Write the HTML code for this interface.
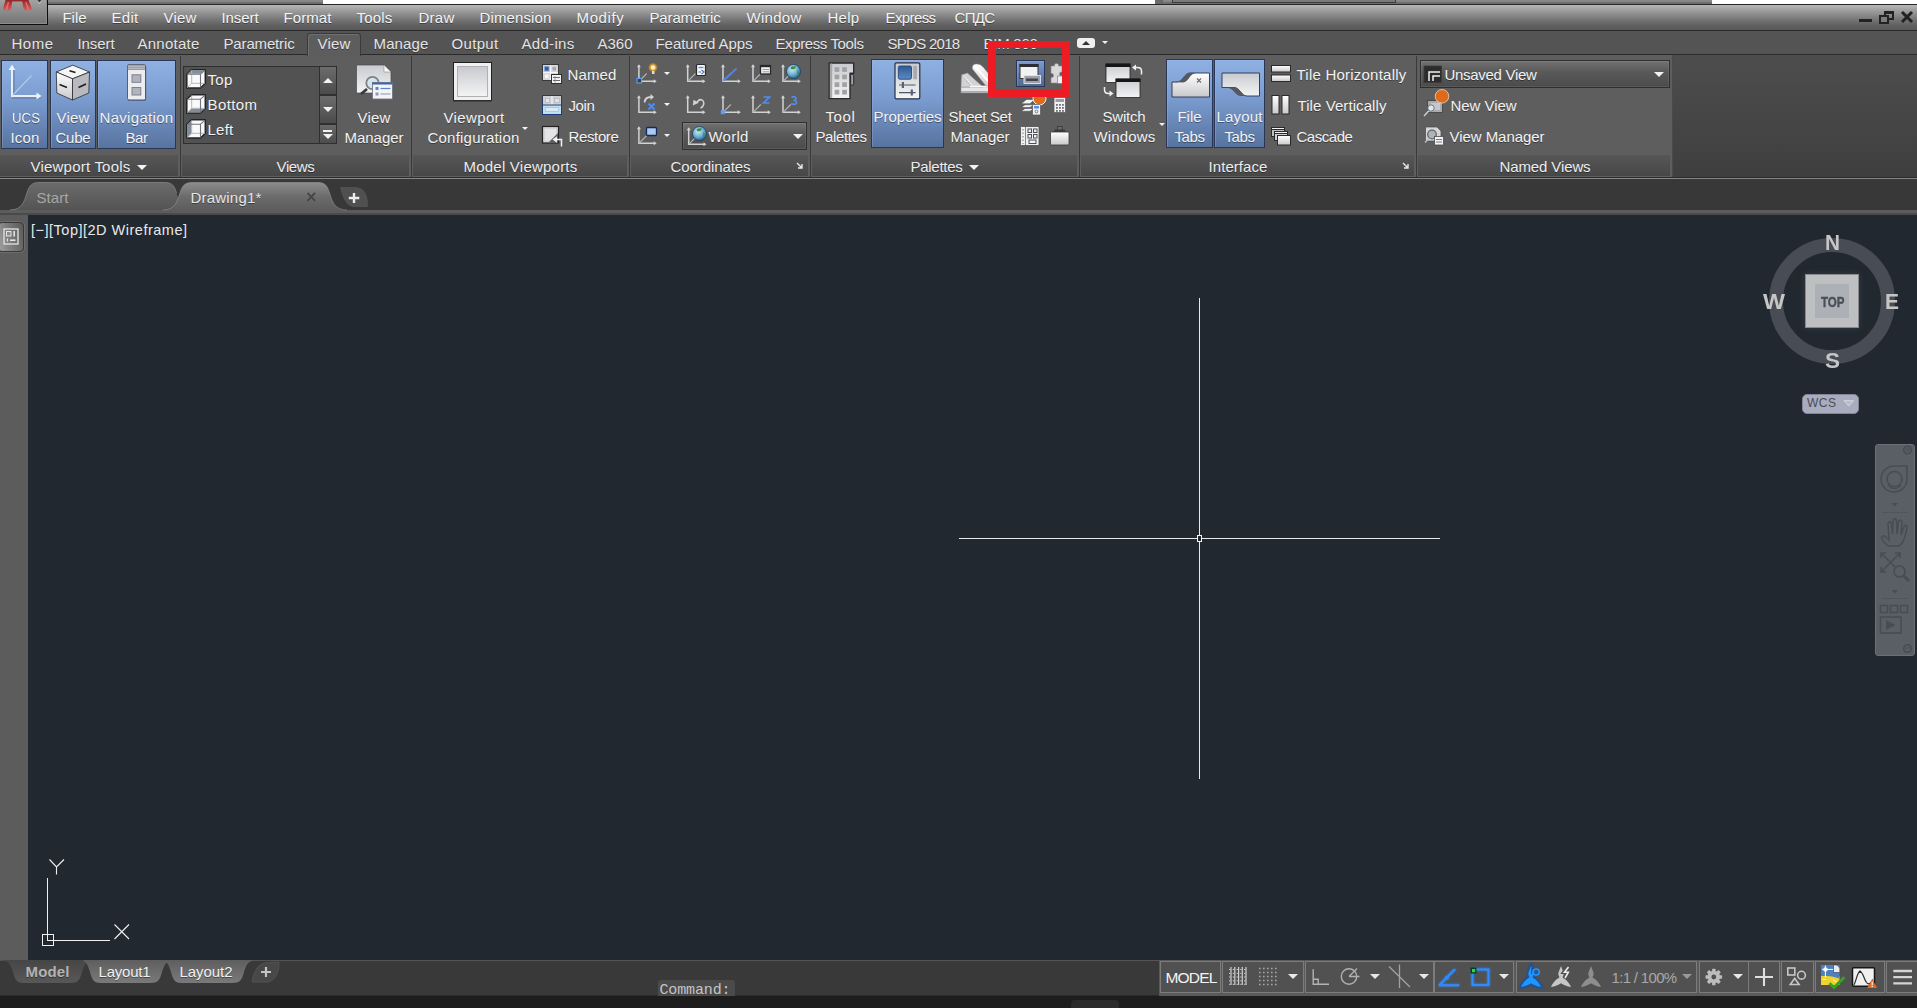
<!DOCTYPE html>
<html><head><meta charset="utf-8"><title>AutoCAD</title>
<style>
html,body{margin:0;padding:0;overflow:hidden;}
body{width:1917px;height:1008px;overflow:hidden;position:relative;background:#212830;font-family:"Liberation Sans",sans-serif;}
.a{position:absolute;}
.t{position:absolute;line-height:1;white-space:nowrap;}
.blue{position:absolute;background:linear-gradient(#8fb1e2 0%,#7a9bcf 45%,#57739f 100%);border:1px solid #2a3658;box-sizing:border-box;box-shadow:inset 1px 1px 0 rgba(160,190,235,.3);}
.sep{position:absolute;top:56px;height:121px;width:1px;background:#393939;}
.pt{position:absolute;top:155px;height:23px;background:#505050;}
svg{position:absolute;overflow:visible;}
.dd{position:absolute;width:0;height:0;border-left:5px solid transparent;border-right:5px solid transparent;border-top:5px solid #f2f2f2;}
.dds{position:absolute;width:0;height:0;border-left:3px solid transparent;border-right:3px solid transparent;border-top:3px solid #f2f2f2;}
.sg{position:absolute;top:961px;height:32px;box-sizing:border-box;border:1px solid #7c7c7c;background:#515151;}
</style></head>
<body>
<!-- top strip -->
<div class="a" style="left:0;top:0;width:1917px;height:4px;background:linear-gradient(#888 0%,#868686 50%,#6e6e6e 55%,#6e6e6e 100%)"></div>
<div class="a" style="left:323px;top:0;width:832px;height:4px;background:#fff"></div>
<div class="a" style="left:1712px;top:0;width:205px;height:4px;background:#fff"></div>
<div class="a" style="left:1172px;top:-1px;width:224px;height:4px;background:#7a7a7a;border:1px solid #3c3c3c;box-sizing:border-box"></div>
<div class="a" style="left:1155px;top:0;width:8px;height:4px;background:#6a6a6a"></div>
<div class="a" style="left:0;top:4px;width:1917px;height:1px;background:#262626"></div>
<!-- menu bar -->
<div class="a" style="left:0;top:5px;width:1917px;height:25px;background:linear-gradient(#b8b8b8 0%,#a4a4a4 16%,#8a8a8a 40%,#747474 60%,#606060 82%,#575757 100%)"></div>
<div class="a" style="left:0;top:30px;width:1917px;height:1px;background:#2a2a2a"></div>
<!-- app button -->
<div class="a" style="left:0;top:0;width:48px;height:25px;background:#0c0c0c"></div>
<div class="a" style="left:0;top:0;width:46.500px;height:23.500px;background:linear-gradient(#a2a2a2,#737373);box-shadow:inset -1px -1px 0 #8c8c8c"></div>
<svg style="left:0;top:0" width="48" height="12" viewBox="0 0 48 12"><defs><linearGradient id="ar" x1="0" y1="0" x2="0" y2="1"><stop offset="0" stop-color="#962426"/><stop offset="1" stop-color="#d95e5e"/></linearGradient></defs>
<path d="M5.500 0 H28.500 L31.800 8.500 Q31.500 10.200 29.500 10.200 H25.500 Q24 10 23.600 8.500 L22.200 1.500 H12.200 L11.200 8.500 Q10.800 10.200 9 10.200 H4.500 Q2.800 10 3.200 8 Z" fill="url(#ar)"/><path d="M6.500 9.500 L8.500 2 M28.500 9.500 L25.800 2" stroke="#f08a8a" stroke-width="1.400" opacity=".7" fill="none"/>
<path d="M37.500 0 H41.300 L39.400 2.300 Z" fill="#2c3344"/><path d="M37.800 1.800 L39.400 3.600 L41 1.800" fill="none" stroke="#d8d8d8" stroke-width=".8" opacity=".7"/></svg>
<!-- window controls -->
<div class="a" style="left:1859px;top:19px;width:13px;height:3px;background:#222"></div>
<div class="a" style="left:1884px;top:11px;width:10px;height:9px;border:2px solid #222;border-top-width:3px;box-sizing:border-box"></div>
<div class="a" style="left:1879px;top:15px;width:10px;height:9px;border:2px solid #222;box-sizing:border-box;background:#7c7c7c"></div>
<svg style="left:1901px;top:12px" width="12" height="10" viewBox="0 0 12 10"><path d="M1 0 L11 10 M11 0 L1 10" stroke="#222" stroke-width="3"/></svg>
<!-- ribbon tab row -->
<div class="a" style="left:0;top:31px;width:1917px;height:23px;background:#545454"></div>
<div class="a" style="left:0;top:54px;width:1917px;height:1px;background:#2a2a2a"></div>
<!-- ribbon body -->
<div class="a" style="left:0;top:55px;width:1917px;height:122px;background:linear-gradient(#4d4d4d,#3f3f3f)"></div>
<div class="a" style="left:0;top:55px;width:1672px;height:122px;background:#5e5e5e"></div>
<div class="a" style="left:0px;top:155px;width:178px;height:21px;background:linear-gradient(#565656,#474747)"></div>
<div class="a" style="left:182px;top:155px;width:227px;height:21px;background:linear-gradient(#565656,#474747)"></div>
<div class="a" style="left:413px;top:155px;width:214px;height:21px;background:linear-gradient(#565656,#474747)"></div>
<div class="a" style="left:631px;top:155px;width:177px;height:21px;background:linear-gradient(#565656,#474747)"></div>
<div class="a" style="left:812px;top:155px;width:265px;height:21px;background:linear-gradient(#565656,#474747)"></div>
<div class="a" style="left:1081px;top:155px;width:333px;height:21px;background:linear-gradient(#565656,#474747)"></div>
<div class="a" style="left:1418px;top:155px;width:252px;height:21px;background:linear-gradient(#565656,#474747)"></div>
<div class="a" style="left:1672px;top:55px;width:1px;height:122px;background:#4a4a4a"></div>
<!-- active View tab -->
<div class="a" style="left:307px;top:33px;width:54px;height:23px;background:#5d5d5d;border:1px solid #3a3a3a;border-bottom:none;box-sizing:border-box;border-radius:3px 3px 0 0;box-shadow:inset 1px 1px 0 #707070"></div>
<!-- panel separators -->
<div class="sep" style="left:180px"></div><div class="sep" style="left:411px"></div><div class="sep" style="left:629px"></div><div class="sep" style="left:810px"></div><div class="sep" style="left:1079px"></div><div class="sep" style="left:1416px"></div>
<!-- blue buttons -->
<div class="blue" style="left:1px;top:60px;width:47px;height:88.500px"></div>
<div class="blue" style="left:50px;top:60px;width:46px;height:88.500px"></div>
<div class="blue" style="left:97px;top:60px;width:79px;height:88.500px"></div>
<div class="blue" style="left:871px;top:59px;width:73px;height:88.500px"></div>
<div class="blue" style="left:1166px;top:59px;width:47px;height:88.500px"></div>
<div class="blue" style="left:1214px;top:59px;width:51px;height:88.500px"></div>
<div class="blue" style="left:1016px;top:60px;width:29px;height:27px;background:linear-gradient(#7c9ace,#52698f)"></div>
<!-- views list box -->
<div class="a" style="left:183px;top:66px;width:154px;height:78px;background:#525252;border:1px solid #2f2f2f;box-sizing:border-box"></div>
<div class="a" style="left:319px;top:67px;width:1px;height:76px;background:#2f2f2f"></div>
<div class="a" style="left:320px;top:67px;width:16px;height:27px;background:linear-gradient(#6c6c6c,#4b4b4b)"></div>
<div class="a" style="left:320px;top:94px;width:16px;height:2px;background:#2f2f2f"></div>
<div class="a" style="left:320px;top:96px;width:16px;height:27px;background:linear-gradient(#6c6c6c,#4b4b4b)"></div>
<div class="a" style="left:320px;top:123px;width:16px;height:2px;background:#2f2f2f"></div>
<div class="a" style="left:320px;top:125px;width:16px;height:18px;background:linear-gradient(#686868,#4d4d4d)"></div>
<div class="a" style="left:322.500px;top:78px;width:0;height:0;border-left:5px solid transparent;border-right:5px solid transparent;border-bottom:5px solid #f2f2f2"></div>
<div class="dd" style="left:322.500px;top:106.500px"></div>
<div class="a" style="left:323px;top:130px;width:9px;height:2px;background:#f0f0f0"></div>
<div class="dd" style="left:322.500px;top:134px"></div>
<!-- World dropdown -->
<div class="a" style="left:682px;top:122px;width:125px;height:28px;background:linear-gradient(#727272,#5a5a5a 40%,#4b4b4b);border:1px solid #2f2f2f;box-sizing:border-box;box-shadow:inset 0 0 0 1px rgba(255,255,255,.08)"></div>
<div class="dd" style="left:793px;top:134px"></div>
<!-- Unsaved view dropdown -->
<div class="a" style="left:1420px;top:60px;width:250px;height:28px;background:linear-gradient(#727272,#5a5a5a 40%,#4b4b4b);border:1px solid #2f2f2f;box-sizing:border-box;box-shadow:inset 0 0 0 1px rgba(255,255,255,.08)"></div>
<div class="dd" style="left:1654px;top:72px"></div>
<!-- title arrows -->
<div class="dd" style="left:137px;top:165px"></div>
<div class="dd" style="left:969px;top:165px"></div>
<div class="dds" style="left:522px;top:127px"></div>
<div class="dds" style="left:1159px;top:123px"></div>
<div class="dds" style="left:664px;top:72px"></div><div class="dds" style="left:664px;top:103px"></div><div class="dds" style="left:664px;top:134px"></div>
<svg style="left:796px;top:162px" width="8" height="8" viewBox="0 0 8 8"><path d="M1 1 L6 6 M6 2 V6 H2" stroke="#e8e8e8" stroke-width="1.4" fill="none"/></svg>
<svg style="left:1402px;top:162px" width="8" height="8" viewBox="0 0 8 8"><path d="M1 1 L6 6 M6 2 V6 H2" stroke="#e8e8e8" stroke-width="1.4" fill="none"/></svg>
<!-- ribbon minimize button -->
<div class="a" style="left:1077px;top:38px;width:18px;height:10px;background:#f0f0f0;border-radius:3px"></div>
<div class="a" style="left:1082px;top:41px;width:0;height:0;border-left:4px solid transparent;border-right:4px solid transparent;border-bottom:4px solid #333"></div>
<div class="dds" style="left:1102px;top:41px"></div>
<!-- band below ribbon + file tabs -->
<div class="a" style="left:0;top:177px;width:1917px;height:1px;background:#2c2c2c"></div>
<div class="a" style="left:0;top:178px;width:1917px;height:1px;background:#868686"></div>
<div class="a" style="left:0;top:179px;width:1917px;height:31px;background:#383838"></div>
<div class="a" style="left:0;top:210px;width:1917px;height:4px;background:#5c5c5c"></div>
<div class="a" style="left:0;top:213px;width:1917px;height:2px;background:#4a4a4a"></div>
<svg style="left:0;top:182px" width="380" height="29" viewBox="0 0 380 29">
 <defs><linearGradient id="ft1" x1="0" y1="0" x2="0" y2="1"><stop offset="0" stop-color="#6b6b6b"/><stop offset="1" stop-color="#545454"/></linearGradient>
 <linearGradient id="ft2" x1="0" y1="0" x2="0" y2="1"><stop offset="0" stop-color="#8c8c8c"/><stop offset=".5" stop-color="#6c6c6c"/><stop offset="1" stop-color="#5c5c5c"/></linearGradient></defs>
 <path d="M10 28 C22 28 24 20 27 11 C29.500 3 32 .5 40 .5 L164 .5 C172 .5 174 3 176.500 11 C179.500 20 181.500 28 193 28 Z" fill="url(#ft1)"/>
 <path d="M10 28 C22 28 24 20 27 11 C29.500 3 32 .5 40 .5 L164 .5 C172 .5 174 3 176.500 11" fill="none" stroke="#7a7a7a" stroke-width="1"/>
 <path d="M163 28.500 C175 28 177 20 180 11 C182.500 3 185 .5 193 .5 L317 .5 C325 .5 327 3 329.500 11 C332.500 20 334.500 28 347 28.500 Z" fill="url(#ft2)"/>
 <path d="M163 28 C175 28 177 20 180 11 C182.500 3 185 .5 193 .5 L317 .5 C325 .5 327 3 329.500 11 C332.500 20 334.500 28 347 28" fill="none" stroke="#9a9a9a" stroke-width=".8" opacity=".7"/>
 <path d="M340.500 5.500 L356 5.500 C365 6.500 367.500 13 367.500 24.500 L353 24.500 C346 23.500 343 15 340.500 5.500 Z" fill="#505050" stroke="#5a5a5a" stroke-width=".6"/>
 <path d="M354 11 V21 M348.800 16 H359.300" stroke="#ececec" stroke-width="2.400"/>
 <path d="M307.500 10.800 L315 18.800 M315 10.800 L307.500 18.800" stroke="#444" stroke-width="1.700"/>
</svg>
<!-- left strip -->
<div class="a" style="left:0;top:215px;width:28px;height:745px;background:#5c5c5c"></div>
<div class="a" style="left:-2px;top:222px;width:26px;height:30px;background:linear-gradient(75deg,#a0a0a0 0%,#7c7c7c 45%,#5a5a5a 100%);border:1px solid #383838;box-sizing:border-box;border-radius:4px;box-shadow:0 0 0 1px #6e6e6e"></div>
<svg style="left:3px;top:228px" width="16" height="17" viewBox="0 0 16 17"><rect x="1" y="1" width="14" height="15" fill="none" stroke="#e4e4e4" stroke-width="1.300"/><rect x="3.500" y="3.500" width="4.500" height="4.500" fill="#8c8c8c" stroke="#e4e4e4" stroke-width="1"/><path d="M11.200 3 V8.500" stroke="#e4e4e4" stroke-width="1.600"/><path d="M4.500 10.500 V13.500" stroke="#e4e4e4" stroke-width="1.200"/><path d="M7 12.200 H12.500" stroke="#e4e4e4" stroke-width="1.600"/></svg>

<!-- ribbon icons -->
<svg style="left:0;top:0" width="1917" height="180" viewBox="0 0 1917 180">
<defs>
 <linearGradient id="gw" x1="0" y1="0" x2="0" y2="1"><stop offset="0" stop-color="#ffffff"/><stop offset="1" stop-color="#c9c9cc"/></linearGradient>
 <linearGradient id="gw2" x1="0" y1="0" x2="0" y2="1"><stop offset="0" stop-color="#c8cad0"/><stop offset="1" stop-color="#f4f4f4"/></linearGradient>
 <linearGradient id="gb" x1="0" y1="0" x2="0" y2="1"><stop offset="0" stop-color="#4a7ab8"/><stop offset="1" stop-color="#2d5a96"/></linearGradient>
 <linearGradient id="gbp" x1="0" y1="0" x2="0" y2="1"><stop offset="0" stop-color="#2c5c94"/><stop offset="1" stop-color="#5d89c0"/></linearGradient>
 <radialGradient id="globe" cx=".4" cy=".35" r=".7"><stop offset="0" stop-color="#cfeaf2"/><stop offset=".55" stop-color="#6fb1cf"/><stop offset="1" stop-color="#1f5a8a"/></radialGradient>
 <radialGradient id="bulb" cx=".5" cy=".5" r=".5"><stop offset="0" stop-color="#fff6c0"/><stop offset=".45" stop-color="#ffb52e"/><stop offset="1" stop-color="#ff9a10" stop-opacity="0"/></radialGradient>
 <g id="ucs" fill="none" stroke="#d2d2d2" stroke-width="1.5"><path d="M1.700 1.500 V17.300 H17.500"/><path d="M1.700 17.300 L9.500 9.500" stroke="#b4b4b4" stroke-width="1.100"/><path d="M-.3 3.300 L1.700 .3 L3.700 3.300 Z M16.500 15.300 L19.500 17.300 L16.500 19.300 Z" fill="#d2d2d2" stroke="none"/></g>
 <g id="ucs0" fill="none" stroke="#d2d2d2" stroke-width="1.500"><path d="M1.700 1.500 V17.300 H17.500"/><path d="M-.3 3.300 L1.700 .3 L3.700 3.300 Z M16.500 15.300 L19.500 17.300 L16.500 19.300 Z" fill="#d2d2d2" stroke="none"/></g>
 <g id="cubebg"><path d="M.8 5.200 L5.700 .8 H19.300 V14.300 L14.500 19 H.8 Z" fill="#fafafa" stroke="#242424" stroke-width="1.500" stroke-linejoin="round"/></g>
 <g id="cubeed" fill="none"><path d="M5.700 1.500 V14.300 H18.800 M5.700 14.300 L1.300 18.500" stroke="#b4b9c1" stroke-width="1"/><path d="M1.300 5.200 H14.500 V18.500 M14.500 5.200 L18.800 1.300" stroke="#6e757f" stroke-width="1.100"/></g>
</defs>
<!-- UCS Icon big -->
<g fill="none" stroke-linecap="square"><path d="M12.500 68 V96.500 H38" stroke="#51689a" stroke-width="3" opacity=".35" transform="translate(1,1)"/><path d="M12 67.500 V96 H38" stroke="#e9eef7" stroke-width="2"/><path d="M13 95 L31 76" stroke="#c8d6ee" stroke-width="1.200" opacity=".8"/>
<path d="M8.500 70 L12 64.500 L15.500 70 Z M36.500 92.500 L41.500 96 L36.500 99.500 Z" fill="#eef2fa" stroke="none"/></g>
<!-- View Cube big -->
<g stroke="#2b2b2b" stroke-width=".8" stroke-linejoin="round"><path d="M72.800 65.200 L89.500 72 L72.500 78.800 L56.300 72 Z" fill="#f6f6f6"/><path d="M56.300 72 L72.500 78.800 V100 L56.800 93 Z" fill="url(#gw)"/><path d="M89.500 72 L72.500 78.800 V100 L88.800 93 Z" fill="#b8babf"/></g>
<path d="M69.500 70.800 L75.500 72.600 M59.500 84.500 L67 87.500 M78.500 87.500 L86 84" stroke="#1e1e1e" stroke-width="1.600" fill="none"/>
<!-- Navigation Bar big -->
<rect x="127.500" y="64.500" width="18" height="35.500" rx="1.500" fill="#ededf0" stroke="#4c5468" stroke-width=".9"/><rect x="127.800" y="64.800" width="17.400" height="5.200" fill="#9499a3"/><path d="M128 66.300 H145 M128 68.300 H145" stroke="#c9ccd2" stroke-width=".8"/>
<rect x="132" y="74.800" width="8.800" height="7.500" fill="#b0b4bd" stroke="#7c818c"/><rect x="132" y="87.500" width="8.800" height="7.500" fill="#b0b4bd" stroke="#7c818c"/>
<path d="M145.800 66 V100.300 H128" stroke="#3a4766" stroke-width=".8" fill="none" opacity=".6"/>
<!-- view list cubes -->
<use href="#cubebg" x="186" y="69"/><path d="M187.300 73.700 L191.700 70.100 H204.600 L200.500 73.700 Z" fill="#848c97"/><use href="#cubeed" x="186" y="69"/>
<use href="#cubebg" x="186" y="94"/><path d="M187.300 112.500 L191.700 108.500 H204.600 L200.500 112.500 Z" fill="#848c97"/><use href="#cubeed" x="186" y="94"/>
<use href="#cubebg" x="186" y="119"/><path d="M187.100 124.500 L191.500 120.500 V133.200 L187.100 137.300 Z" fill="#848c97"/><use href="#cubeed" x="186" y="119"/>
<!-- View Manager big -->
<path d="M356.500 65 H384 L391 72 V93 H356.500 Z" fill="url(#gw2)" stroke="#4a4a4a" stroke-width=".7"/><path d="M384 65 V72 H391 Z" fill="#fafafa" stroke="#8c8c8c" stroke-width=".6"/>
<path d="M367 89 L361 94" stroke="#3a3a3a" stroke-width="2.800"/><circle cx="372.500" cy="83" r="6.200" fill="#d5e6ea" stroke="#7a8288" stroke-width="1.800"/>
<rect x="372.500" y="82.500" width="20" height="16.500" fill="#f3f4f7" stroke="#6b7078" stroke-width=".8"/><rect x="372.500" y="82.500" width="20" height="2" fill="#3a66b0"/>
<rect x="375.500" y="87" width="3" height="3" fill="#5f87c8"/><rect x="375.500" y="92.500" width="3" height="3" fill="#8d99aa"/><path d="M380.500 88.500 H390.500" stroke="#5f87c8" stroke-width="1.200"/><path d="M380.500 94 H390.500" stroke="#9aa5b5" stroke-width="1.200"/>
<!-- Viewport configuration big -->
<rect x="453.500" y="62.500" width="38" height="38" fill="#f0f0f1" stroke="#1f1f1f" stroke-width="1"/><rect x="453" y="100" width="39" height="1.500" fill="#2c2c2c"/>
<rect x="457.500" y="66.500" width="30" height="30" fill="url(#gw2)" stroke="#b0b1b5" stroke-width="1"/>
<!-- Named -->
<rect x="542.500" y="64.500" width="16" height="16" fill="#d6d7da" stroke="#3a3a3a"/><path d="M550.500 65 V80 M543 72.500 H558" stroke="#f5f5f5" stroke-width="1.200"/>
<rect x="544.500" y="66.500" width="4.500" height="4.500" fill="#3a5da0" stroke="#8aa6d8" stroke-width=".8"/><rect x="552.500" y="67" width="3.500" height="3.500" fill="#a6a8ad"/><rect x="545" y="74.500" width="3.500" height="3.500" fill="#f8f8f8"/>
<rect x="551.500" y="74.500" width="10" height="9" fill="#f1f1f2" stroke="#2f2f2f"/><path d="M553 77.500 H560 M553 80.500 H560" stroke="#6a6f78" stroke-width="1.100"/><path d="M555 76 V82.500" stroke="#6a6f78" stroke-width=".6"/>
<!-- Join -->
<rect x="542.500" y="95.500" width="19" height="19" fill="#cfd0d4" stroke="#2f3a55"/><path d="M552 96 V105 M543 105 H561" stroke="#f2f2f2" stroke-width="1.200"/>
<rect x="545.500" y="98.500" width="4" height="4" fill="#e8e8ea" stroke="#b0b2b8" stroke-width=".7"/><rect x="554.500" y="98.500" width="5" height="4" fill="#e0e0e3" stroke="#b0b2b8" stroke-width=".7"/>
<rect x="542.500" y="105" width="19" height="9.500" fill="#c3def0" stroke="#1d3c78"/><rect x="545.500" y="107.500" width="13" height="4" fill="#d9ecf6" stroke="#9cc2dc" stroke-width=".7"/>
<!-- Restore -->
<rect x="542.500" y="126.500" width="16" height="16.500" fill="#d4d4d6" stroke="#222" stroke-width="1.200"/><rect x="545" y="129" width="11" height="11.500" fill="#e4e4e6"/>
<path d="M549 142 L558 133 V143 Z" fill="#5b5b5b"/><path d="M561.500 146.500 V139.500 H556" fill="none" stroke="#f2f2f2" stroke-width="1.500"/><path d="M552.500 139.500 L557 136.300 V142.700 Z" fill="#f2f2f2"/>
<!-- Coordinates icons: origin (x,yTop) ; glyph origin bottom-left at (x+1.7, y+17.3) -->
<use href="#ucs" x="637.200" y="64"/><rect x="637" y="78.500" width="4.500" height="4.500" fill="#3b3f48" stroke="#5aa0ff" stroke-width="1.100"/><circle cx="653" cy="67.500" r="5" fill="url(#bulb)"/><circle cx="653" cy="67.500" r="2" fill="#fff3c4"/><rect x="652" y="71" width="2.500" height="3" fill="#d9dde6"/>
<use href="#ucs" x="686" y="64"/><rect x="696.500" y="64.500" width="9" height="11" rx="1" fill="#f4f5f8" stroke="#2b2b2b" stroke-width="1.200"/><path d="M698.500 67.500 H703.500" stroke="#5f8fd8" stroke-width="1.400"/><path d="M698.500 72 H701 M701.500 70 L704 72 L701.500 74" stroke="#4d6fae" stroke-width="1.100" fill="none"/>
<use href="#ucs" x="721.300" y="64"/><path d="M724 80 L736 69" stroke="#4c86e8" stroke-width="1.800" stroke-linecap="round"/>
<use href="#ucs" x="751.300" y="64"/><rect x="760.500" y="65.500" width="10" height="8.500" fill="#f1f2f4" stroke="#26282c" stroke-width="1.300"/><rect x="760" y="65" width="11" height="2.200" fill="#26282c"/><path d="M762.500 69.500 H769 M762.500 71.800 H769" stroke="#8b919c" stroke-width=".9"/>
<use href="#ucs" x="781.300" y="64"/><circle cx="793.500" cy="71.500" r="7" fill="url(#globe)" stroke="#1c3f66" stroke-width=".8"/><path d="M790.500 67.500 Q793 65.500 796 66.500 L794.500 69 L791.500 69.500 Z M797.500 70 Q799.500 72 798 75.500 Q796.500 73 797.500 70 Z" fill="#3c8a46"/>
<!-- row 2 -->
<use href="#ucs0" x="637.200" y="95"/><path d="M644.500 102.500 Q645 97 651 97" fill="none" stroke="#d2d2d2" stroke-width="1.800"/><path d="M650.500 94 L654 97 L650.500 100 Z" fill="#d2d2d2"/><path d="M648.500 103.500 L654.500 109.500 M654.500 103.500 L648.500 109.500" stroke="#4f8cf0" stroke-width="1.900"/>
<use href="#ucs0" x="686" y="95"/><path d="M696.500 103 Q699 98.500 702 100 Q705 102 703 106 Q702 107.500 700.500 108" fill="none" stroke="#d2d2d2" stroke-width="1.500"/><path d="M692.800 105.500 L693.500 99.800 L698.800 102.800 Z" fill="#d2d2d2"/>
<use href="#ucs" x="721.300" y="95"/><rect x="720.800" y="110.200" width="4" height="4" fill="#5aa0ff"/>
<use href="#ucs" x="751.300" y="95"/><path d="M763.500 97 H769.500 L763.500 103 H769.500" fill="none" stroke="#4f8cf0" stroke-width="1.700"/>
<use href="#ucs" x="781.300" y="95"/><path d="M791.500 97.500 Q794.500 95.500 796 98 Q796.500 100 793.500 100.200 Q797 100.500 796.500 103 Q795 105.500 791.200 103.500" fill="none" stroke="#4f8cf0" stroke-width="1.600"/>
<!-- row 3 -->
<use href="#ucs" x="637.200" y="126"/><rect x="646.500" y="127.500" width="10" height="8" rx="1" fill="#a9c9f2" stroke="#14285a" stroke-width="1.300"/>
<use href="#ucs" x="687" y="127"/><circle cx="699.500" cy="133.500" r="7" fill="url(#globe)" stroke="#1c3f66" stroke-width=".8"/><path d="M696.500 129.500 Q699 127.500 702 128.500 L700.500 131 L697.500 131.500 Z M703.500 132 Q705.500 134 704 137.500 Q702.500 135 703.500 132 Z" fill="#3c8a46"/>
<!-- Tool palettes big -->
<path d="M829.200 63 H853.700 V73.300 H850 V98.600 H829.200 Z" fill="url(#gw2)" stroke="#2c2c2c" stroke-width="1.400" stroke-linejoin="round"/>
<rect x="829.900" y="63.700" width="2.300" height="34.200" fill="#a9a9ab"/>
<rect x="850.700" y="74.400" width="3" height="10.600" rx=".8" fill="#a2a2a4" stroke="#2c2c2c" stroke-width="1"/>
<g fill="#a2a2a4"><rect x="834.600" y="67.200" width="4.700" height="4.700"/><rect x="842.200" y="67.200" width="4.700" height="4.700"/><rect x="834.600" y="74.600" width="4.700" height="4.700"/><rect x="842.200" y="74.600" width="4.700" height="4.700"/><rect x="834.600" y="82.300" width="4.700" height="4.700"/><rect x="842.200" y="82.300" width="4.700" height="4.700"/><rect x="834.600" y="89.800" width="4.700" height="4.700"/><rect x="842.200" y="89.800" width="4.700" height="4.700"/></g>
<!-- Properties big -->
<rect x="895" y="62.800" width="24.800" height="36" rx="1.300" fill="url(#gw2)" stroke="#283049" stroke-width="1.200"/>
<rect x="898.300" y="66" width="13.200" height="13.200" rx="1.600" fill="url(#gbp)" stroke="#1f4a80" stroke-width=".9"/><rect x="913.200" y="66" width="3.800" height="13.200" fill="#a9abb1"/>
<path d="M899 85 H915.500 M899 92.600 H915.500" stroke="#4e5666" stroke-width="1.200"/><path d="M902.900 82.100 V87.900 M911.800 89.600 V95.600" stroke="#566078" stroke-width="2.200"/>
<!-- Sheet Set Manager big -->
<path d="M961 87 H991 V92.800 H961 Z" fill="#e6e6e8" stroke="#8f8f92" stroke-width=".6"/><path d="M961 91.800 H991" stroke="#a8a8ab" stroke-width="1.400"/>
<path d="M961 87 L961.500 74.800 L967.500 73 L983 87 Z" fill="#d2d3d7" stroke="#8a8a8d" stroke-width=".5"/><path d="M963 76 L972 85.500" stroke="#f6f6f6" stroke-width="1.500"/><path d="M961.500 75 L971.500 86" stroke="#9c9ca0" stroke-width=".7"/>
<path d="M970 86.500 H991" stroke="#fafafa" stroke-width="1.600"/>
<path d="M972.500 69 Q971.500 64.500 976 64 Q980 63.500 983 67 L992 78 V87 L986 86 Z" fill="url(#gw)" stroke="#9d9da0" stroke-width=".5"/><path d="M975 66.500 L989 82" stroke="#ffffff" stroke-width="2.500" stroke-linecap="round" opacity=".9"/>
<!-- small palettes icons: command line (in blue btn) -->
<rect x="1020" y="64.500" width="18" height="14" fill="#f2f2f3" stroke="#30343c" stroke-width="1"/><rect x="1019.500" y="64" width="19" height="3" fill="#2b2e35"/>
<rect x="1024" y="75.500" width="16.500" height="8" fill="#9da0a8" stroke="#e6e6e8" stroke-width=".9"/><rect x="1026" y="78.500" width="12" height="2.500" fill="#41454e"/>
<!-- puzzle -->
<path d="M1051 66 H1054.500 Q1054 63.500 1056.500 63.500 Q1059 63.500 1058.500 66 H1062 V72 Q1059.500 71.500 1059.500 74 Q1059.500 76.500 1062 76 V83 H1051 V77.500 Q1053.500 78 1053.500 75.500 Q1053.500 73 1051 73.500 Z" fill="#d9d9db" stroke="#8a8a8a" stroke-width=".6"/><rect x="1057.500" y="76" width="5" height="7.500" fill="#f0f0f2" stroke="#777" stroke-width=".6"/>
<!-- markup set manager -->
<path d="M1021 103.800 L1026.500 99.500 H1034.500 L1030 103.800 Z M1021 107.500 L1025 104.800 H1034 L1030 107.500 Z M1021 111.200 L1025 108.500 H1034 L1030 111.200 Z" fill="#f4f4f4" stroke="#4c4c4c" stroke-width=".6"/>
<circle cx="1039.500" cy="98.500" r="6.500" fill="#e06a1c" stroke="#f4f0ec" stroke-width="1"/>
<rect x="1032.500" y="104.500" width="8" height="10.500" rx="1" fill="#f1f1f3" stroke="#555" stroke-width=".7"/><rect x="1034" y="106" width="5" height="2.500" fill="#5b8ede"/><circle cx="1036.500" cy="111.500" r="1.400" fill="none" stroke="#666" stroke-width=".8"/>
<!-- calculator -->
<rect x="1054" y="97.500" width="11.500" height="15" rx="1" fill="#f2f2f3" stroke="#555" stroke-width=".7"/><rect x="1055.500" y="99" width="8.500" height="3" fill="#9a9da4"/><g fill="#6c6f76"><rect x="1056" y="104" width="1.800" height="1.800"/><rect x="1059" y="104" width="1.800" height="1.800"/><rect x="1062" y="104" width="1.800" height="1.800"/><rect x="1056" y="107" width="1.800" height="1.800"/><rect x="1059" y="107" width="1.800" height="1.800"/><rect x="1062" y="107" width="1.800" height="1.800"/><rect x="1056" y="110" width="1.800" height="1.800"/><rect x="1059" y="110" width="1.800" height="1.800"/><rect x="1062" y="110" width="1.800" height="1.800"/></g>
<!-- design center-ish -->
<rect x="1020.500" y="126.500" width="18.500" height="19" rx="1" fill="#f0f0f2" stroke="#4e4e4e" stroke-width=".8"/><path d="M1025.500 127 V145" stroke="#6a6a6a" stroke-width=".8"/><path d="M1023 129 V144" stroke="#777" stroke-width="1" stroke-dasharray="1.500 2"/>
<g fill="none" stroke="#4a4e58" stroke-width="1"><rect x="1028" y="129" width="3.500" height="3.500"/><rect x="1033.500" y="129" width="3.500" height="3.500"/><rect x="1028" y="134.500" width="3.500" height="3.500"/><rect x="1033.500" y="134.500" width="3.500" height="3.500"/><rect x="1029" y="140" width="7" height="3.500"/></g>
<!-- clipboard -->
<rect x="1050.500" y="132" width="18.500" height="13" rx="1" fill="url(#gw)" stroke="#3a3a3a" stroke-width=".8"/><path d="M1053 132 L1055 129.500 H1064.500 L1066.500 132 Z" fill="#3c3c3c"/><rect x="1057.500" y="126.500" width="4.500" height="3.500" fill="#6a6a6a" stroke="#2a2a2a" stroke-width=".6"/>
<!-- Switch windows big -->
<rect x="1106" y="64" width="24" height="18.500" fill="url(#gw2)" stroke="#222" stroke-width=".8"/><rect x="1105.600" y="63.600" width="24.800" height="3.400" fill="#161616"/>
<rect x="1116" y="79" width="24" height="18.500" fill="url(#gw2)" stroke="#222" stroke-width=".8"/><rect x="1115.600" y="78.600" width="24.800" height="3.400" fill="#161616"/>
<path d="M1141.500 74.500 V71 Q1141.500 67.500 1137.500 67.500 H1135" fill="none" stroke="#f0f0f0" stroke-width="1.500"/><path d="M1132 67.500 L1136 64.500 V70.500 Z" fill="#f0f0f0"/>
<path d="M1104.500 87 V90 Q1104.500 93.500 1108.500 93.500 H1110.500" fill="none" stroke="#f0f0f0" stroke-width="1.500"/><path d="M1113.500 93.500 L1109.500 90.500 V96.500 Z" fill="#f0f0f0"/>
<!-- File tabs big -->
<path d="M1172 97 V82 H1177 C1183 82 1184 73 1190 73 H1209.500 V97 Z" fill="url(#gw)" stroke="#26314f" stroke-width=".9"/>
<path d="M1172 82 H1177 C1183 82 1184 73 1190 73 H1196 C1190 73 1189 82 1183 82.500 Z" fill="#55585e"/>
<path d="M1197 78.500 L1201 82.500 M1201 78.500 L1197 82.500" stroke="#6a6a6a" stroke-width="1.100"/>
<!-- Layout tabs big -->
<path d="M1222 73 H1259.500 V96 H1247 C1241 96 1240 87.500 1234 87.500 H1222 Z" fill="url(#gw2)" stroke="#26314f" stroke-width=".9"/>
<path d="M1222 87.500 H1234 C1240 87.500 1241 96 1247 96 H1241 C1235 96 1234 88.500 1228 88 Z" fill="#55585e"/>
<!-- Tile H -->
<rect x="1271.500" y="65.500" width="19" height="6.500" fill="url(#gw)" stroke="#2a2a2a" stroke-width="1"/><rect x="1271.500" y="75" width="19" height="6.500" fill="url(#gw)" stroke="#2a2a2a" stroke-width="1"/>
<!-- Tile V -->
<rect x="1272" y="95.500" width="7" height="18.500" fill="url(#gw)" stroke="#2a2a2a" stroke-width="1"/><rect x="1282" y="95.500" width="7" height="18.500" fill="url(#gw)" stroke="#2a2a2a" stroke-width="1"/>
<!-- Cascade -->
<g stroke="#2a2a2a" stroke-width="1"><rect x="1271.500" y="127.500" width="13" height="9" fill="#bfbfc2"/><rect x="1271.500" y="127.500" width="13" height="2" fill="#f2f2f2"/><rect x="1274.500" y="131.500" width="13" height="9" fill="#cfcfd2"/><rect x="1274.500" y="131.500" width="13" height="2" fill="#f2f2f2"/><rect x="1277.500" y="135.500" width="13" height="9.500" fill="url(#gw)"/></g>
<!-- Unsaved view icon -->
<rect x="1424" y="66" width="17.500" height="16.500" fill="#2c2c2c" stroke="#3c3c3c" stroke-width=".8"/><path d="M1429 81 V72 H1440 M1433 81 V76 H1440" fill="none" stroke="#f2f2f2" stroke-width="1.500"/>
<!-- New view -->
<rect x="1427.500" y="100.500" width="15" height="12" fill="#a9abb0" stroke="#3e3e3e" stroke-width=".8"/><rect x="1431" y="103" width="9" height="7" fill="#c6c8cc"/>
<path d="M1429 110.500 L1424 116" stroke="#cfcfcf" stroke-width="1.400"/><circle cx="1431" cy="108" r="3.200" fill="#dfe9ec" stroke="#6f767c" stroke-width="1"/>
<circle cx="1442" cy="96.300" r="6.800" fill="#e06a1c" stroke="#f2e6dc" stroke-width=".7"/>
<!-- View manager small -->
<path d="M1425.500 127 H1437 L1441 131 V141 H1425.500 Z" fill="#d5d6da" stroke="#4a4a4a" stroke-width=".7"/><circle cx="1432" cy="134.500" r="4.300" fill="#aeb3b9" stroke="#5f656c" stroke-width="1.300"/><path d="M1429 138 L1425 142.500" stroke="#bdbdbd" stroke-width="1.500"/>
<rect x="1434.500" y="136.500" width="9" height="8.500" fill="#f3f3f5" stroke="#4c4c4c" stroke-width=".8"/><path d="M1436 139.500 H1442 M1436 142 H1442" stroke="#6a7080" stroke-width=".9"/>
</svg>

<!-- crosshair -->
<div class="a" style="left:1199px;top:298px;width:1px;height:481px;background:#e8e8e8"></div>
<div class="a" style="left:959px;top:538px;width:481px;height:1px;background:#e8e8e8"></div>
<div class="a" style="left:1197px;top:535px;width:5px;height:7px;border:1px solid #f4f4f4;box-sizing:border-box;background:#212830"></div>
<!-- UCS icon -->
<svg style="left:0;top:0" width="200" height="1008" viewBox="0 0 200 1008"><g stroke="#f0f0f0" stroke-width="1" fill="none" shape-rendering="crispEdges">
<rect x="42.5" y="934.5" width="11" height="11"/><path d="M47.5 878 V940 M47 940.5 H110"/></g>
<g stroke="#f0f0f0" stroke-width="1.1" fill="none"><path d="M49.5 859.5 L56.5 867 L64 859.5 M56.5 867 V874.5"/><path d="M114.5 924.5 L129 939 M129 924.5 L114.5 939"/></g></svg>
<!-- viewcube -->
<div class="a" style="left:1769px;top:238px;width:126px;height:126px;border-radius:50%;border:14px solid #484c55;box-sizing:border-box"></div>
<div class="a" style="left:1805px;top:274px;width:54px;height:54px;background:#bebfc1;box-shadow:0 0 6px rgba(60,66,78,.8),inset 0 0 0 1px rgba(90,93,99,.55)"></div>
<div class="a" style="left:1815px;top:284px;width:34px;height:34px;background:#adb0b6"></div>
<div class="a" style="left:1802px;top:394px;width:57px;height:20px;background:#a9acbe;border:1.5px solid #83869a;box-sizing:border-box;border-radius:5px"></div>
<svg style="left:1843px;top:400px" width="12" height="7" viewBox="0 0 12 7"><path d="M1 .7 H10.5 L5.7 6 Z" fill="#b8bbcb" stroke="#d5d7e2" stroke-width="1"/></svg>
<!-- nav bar -->
<div class="a" style="left:1875px;top:444px;width:40px;height:212px;background:#5a5f66;border:1px solid #6b7077;box-sizing:border-box;border-radius:3px"></div>
<svg style="left:1875px;top:444px" width="40" height="212" viewBox="0 0 40 212"><g fill="none" stroke="#484d55" stroke-width="1.6">
<circle cx="32.5" cy="6" r="3.8"/><path d="M30.5 4 L34.5 8 M34.5 4 L30.5 8" stroke-width="1"/>
<circle cx="32.5" cy="204.5" r="3.8"/><path d="M30 204 H35" stroke-width="1"/>
<path d="M20 22 H32 V36 A13 13 0 1 1 20 22 Z"/><circle cx="19.5" cy="35" r="7.5"/><path d="M13 41 Q19.5 48 26 41"/>
<path d="M7 68.5 H33 M7 154.500 H33" stroke-width="1" stroke="#50555c"/>
<path d="M8 97 C5 92 8 90 12 94 L14 96 L13 80 C13 77 16 77 16.5 80 L17.5 90 L18 77 C18 74 21.500 74 21.500 77 L22 90 L23.500 78 C24 75 27 75.500 27 78.500 L26 91 L29 83 C30 80 33 81 32 84 C30 92 29 99 24 102 L13 102 Z" stroke-width="1.5"/>
<path d="M6 109 L25 128 M25 109 L6 128 M6 114 V109 H11 M20 109 H25 V114 M6 123 V128 H11" stroke-width="1.6"/><circle cx="24.500" cy="127.500" r="5.500" fill="#5a5f66"/><path d="M28.500 131.500 L34 137" stroke-width="3"/>
<rect x="5.500" y="161.500" width="7" height="7"/><rect x="15.500" y="161.500" width="7" height="7"/><rect x="25.500" y="161.500" width="7" height="7"/>
<rect x="5.500" y="173" width="20.500" height="16"/></g>
<g fill="#484d55"><path d="M16.500 59 H23 L19.750 62.500 Z"/><path d="M16.500 146 H23 L19.750 149.500 Z"/><path d="M11 176 V186 L20.500 181 Z"/></g></svg>

<!-- bottom bars -->
<div class="a" style="left:0;top:960px;width:1917px;height:36px;background:#393939"></div>
<div class="a" style="left:0;top:960px;width:1917px;height:1px;background:#545454"></div>
<div class="a" style="left:0;top:995px;width:1159px;height:1px;background:#2a2a2a"></div>
<div class="a" style="left:0;top:996px;width:1917px;height:12px;background:#1d1d1d"></div>
<div class="a" style="left:1071px;top:1000px;width:48px;height:8px;background:#2b2b2b;border-radius:4px 4px 0 0"></div>
<!-- layout tabs -->
<svg style="left:0;top:960px" width="300" height="26" viewBox="0 0 300 26">
<defs><linearGradient id="lt" x1="0" y1="0" x2="0" y2="1"><stop offset="0" stop-color="#5e5e5e"/><stop offset="1" stop-color="#7a7a7a"/></linearGradient>
<linearGradient id="lm" x1="0" y1="0" x2="0" y2="1"><stop offset="0" stop-color="#464646"/><stop offset="1" stop-color="#585858"/></linearGradient></defs>
<path d="M2 0 C10 2 11 6 13 12 C15 20 17 23 24 23 L70 23 C78 23 80 20 82 12 C84 6 85 2 92 0 Z" fill="url(#lm)"/>
<path d="M82 0 C87 2 88 6 90 12 C92 20 94 23 101 23 L150 23 C158 23 160 20 162 12 C164 6 165 2 172 0 Z" fill="url(#lt)"/>
<path d="M163 0 C168 2 169 6 171 12 C173 20 175 23 182 23 L232 23 C240 23 242 20 244 12 C246 6 247 2 254 0 Z" fill="url(#lt)"/>
<path d="M252 22 C254 10 258 3 268 2.500 L279 2 C279 12 276 20 268 22 Z" fill="#484848" stroke="#525252"/>
<path d="M266 7 V17 M261 12 H271" stroke="#c4c4c4" stroke-width="2.200"/>
</svg>
<!-- command line -->
<div class="a" style="left:657.500px;top:980px;width:77px;height:16px;background:#4a4a4a;border-radius:3px 3px 0 0"></div>
<!-- status bar groups -->
<div class="a" style="left:1159px;top:960px;width:758px;height:36px;background:#5a5a5a"></div>
<div class="sg" style="left:1160px;width:61px"></div>
<div class="sg" style="left:1222px;width:82px"></div>
<div class="sg" style="left:1305px;width:129px"></div>
<div class="sg" style="left:1434px;width:80px"></div>
<div class="sg" style="left:1516px;width:181px"></div>
<div class="sg" style="left:1699px;width:81px"></div>
<div class="a" style="left:1748px;top:962px;width:1px;height:30px;background:#7c7c7c"></div>
<div class="sg" style="left:1781px;width:33px"></div>
<div class="sg" style="left:1815px;width:70px"></div>
<div class="sg" style="left:1886px;width:31px;border-right:none"></div>
<div class="dd" style="left:1288px;top:974px;border-top-color:#e8e8e8"></div>
<div class="dd" style="left:1370px;top:974px;border-top-color:#e8e8e8"></div>
<div class="dd" style="left:1419px;top:974px;border-top-color:#e8e8e8"></div>
<div class="dd" style="left:1499px;top:974px;border-top-color:#e8e8e8"></div>
<div class="dd" style="left:1682px;top:974px;border-top-color:#9a9a9a"></div>
<div class="dd" style="left:1733px;top:974px;border-top-color:#e8e8e8"></div>
<!-- status icons -->
<svg style="left:0;top:0" width="1917" height="1008" viewBox="0 0 1917 1008">
<defs><filter id="glow" x="-30%" y="-30%" width="160%" height="160%"><feGaussianBlur stdDeviation="1.200" result="b"/><feMerge><feMergeNode in="b"/><feMergeNode in="SourceGraphic"/></feMerge></filter>
<g id="tri"><path d="M10 0 C11 3 12.700 6 12.700 8 C12.700 9.500 11.600 10.500 11.600 11.500 C14.500 13 18.500 17 20 21 C16 20.300 12.500 19 10 17.200 C7.500 19 4 20.300 0 21 C1.500 17 5.500 13 8.400 11.500 C8.400 10.500 7.300 9.500 7.300 8 C7.300 6 9 3 10 0 Z"/></g></defs>
<!-- grid -->
<g stroke="#cfcfcf" stroke-width="1.200"><path d="M1231 967 V985 M1234.800 967 V985 M1238.600 967 V985 M1242.300 967 V985 M1246 967 V985"/><path d="M1229 969.500 H1247.500 M1229 973.300 H1247.500 M1229 977 H1247.500 M1229 980.800 H1247.500 M1229 984.300 H1247.500" stroke-dasharray="1.300 2.450" stroke-width="1"/></g>
<!-- dots -->
<g stroke="#a9a9a9" stroke-width="1.600" stroke-dasharray="1.600 2.400"><path d="M1259 968.500 H1277 M1259 972.500 H1277 M1259 976.500 H1277 M1259 980.500 H1277 M1259 984.500 H1277"/></g>
<!-- ortho -->
<path d="M1313.200 969.300 V984.300 H1329 M1313.200 979.300 H1318.200 V984.300" fill="none" stroke="#b4b4b4" stroke-width="1.400"/>
<!-- polar -->
<circle cx="1349" cy="976.500" r="7.700" fill="none" stroke="#b0b0b0" stroke-width="1.400"/><path d="M1349 976.500 H1359.500 M1349 976.500 L1357 968.500" stroke="#b0b0b0" stroke-width="1.300"/>
<!-- otrack -->
<path d="M1399.500 964.500 V988 M1389 966.500 L1410 987" stroke="#a2a2a2" stroke-width="1.300"/>
<!-- blue angle -->
<g filter="url(#glow)"><path d="M1439.500 985.300 H1458.500 M1439.500 985 L1454.500 969.800" stroke="#2d8cff" stroke-width="2" fill="none" stroke-linecap="round"/><rect x="1445.300" y="976" width="3.400" height="3.400" fill="#2d8cff"/></g>
<g filter="url(#glow)"><rect x="1472.500" y="969.500" width="16" height="15.500" fill="none" stroke="#2d8cff" stroke-width="2"/></g>
<rect x="1470.500" y="967.500" width="6" height="6" fill="#0e3a1a"/><rect x="1472" y="969" width="3.200" height="3.200" fill="#1fe03c"/>
<!-- annotation icons -->
<g filter="url(#glow)"><use href="#tri" x="1521" y="966" fill="#1d4f9c" stroke="#1d4f9c" stroke-width="2.400"/></g><use href="#tri" x="1521" y="966" fill="#1e96ff"/>
<circle cx="1536.200" cy="972" r="3.100" fill="#2a5596" stroke="#1e96ff" stroke-width="1.500"/><path d="M1531.700 968 V974" stroke="#1d4f9c" stroke-width="1"/>
<use href="#tri" x="1551" y="966" fill="#c6c6c6"/><path d="M1568 966.500 L1563.500 972.500 H1567.500 L1564.500 978.500" fill="none" stroke="#505050" stroke-width="3.200"/><path d="M1568.500 967 L1564.500 972.300 H1568.300 L1565 978" fill="none" stroke="#ececec" stroke-width="1.600"/>
<use href="#tri" x="1581" y="966" fill="#8e8e8e"/>
<!-- gear -->
<g transform="translate(1713.800 977)"><g fill="#bdbdbd"><circle r="6.200"/><g id="teeth"><rect x="-1.700" y="-8.300" width="3.400" height="16.600" rx=".6"/><rect x="-8.300" y="-1.700" width="16.600" height="3.400" rx=".6"/></g><use href="#teeth" transform="rotate(45)"/></g><circle r="2.400" fill="#4f4f4f"/></g>
<!-- plus -->
<path d="M1764 968 V986 M1755 977 H1773" stroke="#dedede" stroke-width="2.100"/>
<!-- shapes -->
<g fill="none" stroke="#c6c6c6" stroke-width="1.600"><rect x="1787.800" y="968" width="7" height="7"/><circle cx="1801.500" cy="975.200" r="3.900"/><path d="M1790.300 984.500 L1794.700 978.300 L1799.100 984.500 Z"/></g>
<!-- workspace / colored icon -->
<rect x="1821" y="965" width="18.500" height="11" fill="#4d80c0"/><rect x="1821" y="976" width="18.500" height="9" fill="#f0d22e"/><path d="M1821 976 Q1830 975 1839.500 978.500 V976 Z" fill="#4d80c0"/>
<path d="M1833.500 965 H1837 L1839.800 968 V972.500 H1833.500 Z" fill="#e9ebf0" stroke="#2c3a5c" stroke-width=".6"/>
<circle cx="1825.400" cy="969.400" r="2.200" fill="#fff"/><circle cx="1825.400" cy="969.400" r=".9" fill="#4d80c0"/><path d="M1825.400 965.500 V977.500 M1822 969.400 H1833" stroke="#fff" stroke-width="1"/>
<path d="M1823 979.500 H1826 M1833 980 L1837 982" stroke="#fff" stroke-width="1" opacity=".8"/>
<path d="M1829.500 983.200 L1834 987.600 L1844.300 977.300" fill="none" stroke="#36a420" stroke-width="2.800"/>
<!-- graph icon -->
<rect x="1852.500" y="967.800" width="22" height="18.500" rx="1" fill="#f0f0f1" stroke="#161616" stroke-width="1.500"/><path d="M1853.800 985.300 C1856.300 981 1857.300 971.700 1860 971.700 C1862.800 971.700 1864 979 1866.500 982.500 C1868.500 985 1870.500 984 1873 979.500" fill="none" stroke="#2a2a2a" stroke-width="1.200"/><circle cx="1860" cy="971.800" r="1.200" fill="#1c1c1c"/>
<path d="M1872.200 979 L1877.200 988 H1867.200 Z" fill="#e8661a"/><path d="M1872.200 981.800 V985.200" stroke="#fff" stroke-width="1.100"/><rect x="1871.600" y="985.900" width="1.200" height="1.200" fill="#fff"/>
<!-- hamburger -->
<path d="M1893.300 971 H1912 M1893.300 977.200 H1912 M1893.300 983.400 H1912" stroke="#d4d4d4" stroke-width="2.300"/>
</svg>

<!-- text -->
<span class="t" id="t0" style="left:62.50px;top:10.30px;font-size:15px;color:#f4f4f4;font-weight:normal;font-family:'Liberation Sans', sans-serif;letter-spacing:-0.043px;text-shadow:0 1px 0 rgba(0,0,0,.4);">File</span>
<span class="t" id="t1" style="left:111.50px;top:10.30px;font-size:15px;color:#f4f4f4;font-weight:normal;font-family:'Liberation Sans', sans-serif;letter-spacing:0.285px;text-shadow:0 1px 0 rgba(0,0,0,.4);">Edit</span>
<span class="t" id="t2" style="left:163.50px;top:10.30px;font-size:15px;color:#f4f4f4;font-weight:normal;font-family:'Liberation Sans', sans-serif;letter-spacing:0.188px;text-shadow:0 1px 0 rgba(0,0,0,.4);">View</span>
<span class="t" id="t3" style="left:221.50px;top:10.30px;font-size:15px;color:#f4f4f4;font-weight:normal;font-family:'Liberation Sans', sans-serif;letter-spacing:-0.086px;text-shadow:0 1px 0 rgba(0,0,0,.4);">Insert</span>
<span class="t" id="t4" style="left:283.50px;top:10.30px;font-size:15px;color:#f4f4f4;font-weight:normal;font-family:'Liberation Sans', sans-serif;letter-spacing:0.081px;text-shadow:0 1px 0 rgba(0,0,0,.4);">Format</span>
<span class="t" id="t5" style="left:356.50px;top:10.30px;font-size:15px;color:#f4f4f4;font-weight:normal;font-family:'Liberation Sans', sans-serif;letter-spacing:0.194px;text-shadow:0 1px 0 rgba(0,0,0,.4);">Tools</span>
<span class="t" id="t6" style="left:418.50px;top:10.30px;font-size:15px;color:#f4f4f4;font-weight:normal;font-family:'Liberation Sans', sans-serif;letter-spacing:0.246px;text-shadow:0 1px 0 rgba(0,0,0,.4);">Draw</span>
<span class="t" id="t7" style="left:479.50px;top:10.30px;font-size:15px;color:#f4f4f4;font-weight:normal;font-family:'Liberation Sans', sans-serif;letter-spacing:0.125px;text-shadow:0 1px 0 rgba(0,0,0,.4);">Dimension</span>
<span class="t" id="t8" style="left:576.50px;top:10.30px;font-size:15px;color:#f4f4f4;font-weight:normal;font-family:'Liberation Sans', sans-serif;letter-spacing:0.635px;text-shadow:0 1px 0 rgba(0,0,0,.4);">Modify</span>
<span class="t" id="t9" style="left:649.50px;top:10.30px;font-size:15px;color:#f4f4f4;font-weight:normal;font-family:'Liberation Sans', sans-serif;letter-spacing:-0.153px;text-shadow:0 1px 0 rgba(0,0,0,.4);">Parametric</span>
<span class="t" id="t10" style="left:746.50px;top:10.30px;font-size:15px;color:#f4f4f4;font-weight:normal;font-family:'Liberation Sans', sans-serif;letter-spacing:0.273px;text-shadow:0 1px 0 rgba(0,0,0,.4);">Window</span>
<span class="t" id="t11" style="left:827.50px;top:10.30px;font-size:15px;color:#f4f4f4;font-weight:normal;font-family:'Liberation Sans', sans-serif;letter-spacing:0.285px;text-shadow:0 1px 0 rgba(0,0,0,.4);">Help</span>
<span class="t" id="t12" style="left:885.50px;top:10.30px;font-size:15px;color:#f4f4f4;font-weight:normal;font-family:'Liberation Sans', sans-serif;letter-spacing:-0.598px;text-shadow:0 1px 0 rgba(0,0,0,.4);">Express</span>
<span class="t" id="t13" style="left:954.50px;top:10.30px;font-size:15px;color:#f4f4f4;font-weight:normal;font-family:'Liberation Sans', sans-serif;letter-spacing:-0.652px;text-shadow:0 1px 0 rgba(0,0,0,.4);">СПДС</span>
<span class="t" id="t14" style="left:11.50px;top:36.30px;font-size:15px;color:#e4e4e4;font-weight:normal;font-family:'Liberation Sans', sans-serif;letter-spacing:0.496px;text-shadow:0 1px 0 rgba(0,0,0,.4);">Home</span>
<span class="t" id="t15" style="left:77.50px;top:36.30px;font-size:15px;color:#e4e4e4;font-weight:normal;font-family:'Liberation Sans', sans-serif;letter-spacing:-0.086px;text-shadow:0 1px 0 rgba(0,0,0,.4);">Insert</span>
<span class="t" id="t16" style="left:137.50px;top:36.30px;font-size:15px;color:#e4e4e4;font-weight:normal;font-family:'Liberation Sans', sans-serif;letter-spacing:0.242px;text-shadow:0 1px 0 rgba(0,0,0,.4);">Annotate</span>
<span class="t" id="t17" style="left:223.50px;top:36.30px;font-size:15px;color:#e4e4e4;font-weight:normal;font-family:'Liberation Sans', sans-serif;letter-spacing:-0.153px;text-shadow:0 1px 0 rgba(0,0,0,.4);">Parametric</span>
<span class="t" id="t18" style="left:317.50px;top:36.30px;font-size:15px;color:#e4e4e4;font-weight:normal;font-family:'Liberation Sans', sans-serif;letter-spacing:0.188px;text-shadow:0 1px 0 rgba(0,0,0,.4);">View</span>
<span class="t" id="t19" style="left:373.50px;top:36.30px;font-size:15px;color:#e4e4e4;font-weight:normal;font-family:'Liberation Sans', sans-serif;letter-spacing:0.130px;text-shadow:0 1px 0 rgba(0,0,0,.4);">Manage</span>
<span class="t" id="t20" style="left:451.50px;top:36.30px;font-size:15px;color:#e4e4e4;font-weight:normal;font-family:'Liberation Sans', sans-serif;letter-spacing:0.328px;text-shadow:0 1px 0 rgba(0,0,0,.4);">Output</span>
<span class="t" id="t21" style="left:521.50px;top:36.30px;font-size:15px;color:#e4e4e4;font-weight:normal;font-family:'Liberation Sans', sans-serif;letter-spacing:0.306px;text-shadow:0 1px 0 rgba(0,0,0,.4);">Add-ins</span>
<span class="t" id="t22" style="left:597.50px;top:36.30px;font-size:15px;color:#e4e4e4;font-weight:normal;font-family:'Liberation Sans', sans-serif;letter-spacing:-0.012px;text-shadow:0 1px 0 rgba(0,0,0,.4);">A360</span>
<span class="t" id="t23" style="left:655.50px;top:36.30px;font-size:15px;color:#e4e4e4;font-weight:normal;font-family:'Liberation Sans', sans-serif;letter-spacing:-0.044px;text-shadow:0 1px 0 rgba(0,0,0,.4);">Featured Apps</span>
<span class="t" id="t24" style="left:775.50px;top:36.30px;font-size:15px;color:#e4e4e4;font-weight:normal;font-family:'Liberation Sans', sans-serif;letter-spacing:-0.393px;text-shadow:0 1px 0 rgba(0,0,0,.4);">Express Tools</span>
<span class="t" id="t25" style="left:887.50px;top:36.30px;font-size:15px;color:#e4e4e4;font-weight:normal;font-family:'Liberation Sans', sans-serif;letter-spacing:-0.710px;text-shadow:0 1px 0 rgba(0,0,0,.4);">SPDS 2018</span>
<span class="t" id="t26" style="left:983.50px;top:36.30px;font-size:15px;color:#e4e4e4;font-weight:normal;font-family:'Liberation Sans', sans-serif;letter-spacing:-0.268px;text-shadow:0 1px 0 rgba(0,0,0,.4);">BIM 360</span>
<span class="t" id="t27" style="left:11.50px;top:109.80px;font-size:15px;color:#f2f2f2;font-weight:normal;font-family:'Liberation Sans', sans-serif;letter-spacing:0.000px;text-shadow:0 1px 0 rgba(0,0,0,.4);transform:scaleX(0.8841);transform-origin:0 0;">UCS</span>
<span class="t" id="t28" style="left:10.50px;top:129.80px;font-size:15px;color:#f2f2f2;font-weight:normal;font-family:'Liberation Sans', sans-serif;letter-spacing:0.160px;text-shadow:0 1px 0 rgba(0,0,0,.4);">Icon</span>
<span class="t" id="t29" style="left:56.50px;top:109.80px;font-size:15px;color:#f2f2f2;font-weight:normal;font-family:'Liberation Sans', sans-serif;letter-spacing:0.188px;text-shadow:0 1px 0 rgba(0,0,0,.4);">View</span>
<span class="t" id="t30" style="left:55.50px;top:129.80px;font-size:15px;color:#f2f2f2;font-weight:normal;font-family:'Liberation Sans', sans-serif;letter-spacing:-0.215px;text-shadow:0 1px 0 rgba(0,0,0,.4);">Cube</span>
<span class="t" id="t31" style="left:99.50px;top:109.80px;font-size:15px;color:#f2f2f2;font-weight:normal;font-family:'Liberation Sans', sans-serif;letter-spacing:0.311px;text-shadow:0 1px 0 rgba(0,0,0,.4);">Navigation</span>
<span class="t" id="t32" style="left:125.50px;top:129.80px;font-size:15px;color:#f2f2f2;font-weight:normal;font-family:'Liberation Sans', sans-serif;letter-spacing:-0.448px;text-shadow:0 1px 0 rgba(0,0,0,.4);">Bar</span>
<span class="t" id="t33" style="left:357.50px;top:109.80px;font-size:15px;color:#f2f2f2;font-weight:normal;font-family:'Liberation Sans', sans-serif;letter-spacing:0.188px;text-shadow:0 1px 0 rgba(0,0,0,.4);">View</span>
<span class="t" id="t34" style="left:344.50px;top:129.80px;font-size:15px;color:#f2f2f2;font-weight:normal;font-family:'Liberation Sans', sans-serif;letter-spacing:-0.029px;text-shadow:0 1px 0 rgba(0,0,0,.4);">Manager</span>
<span class="t" id="t35" style="left:443.50px;top:109.80px;font-size:15px;color:#f2f2f2;font-weight:normal;font-family:'Liberation Sans', sans-serif;letter-spacing:0.363px;text-shadow:0 1px 0 rgba(0,0,0,.4);">Viewport</span>
<span class="t" id="t36" style="left:427.50px;top:129.80px;font-size:15px;color:#f2f2f2;font-weight:normal;font-family:'Liberation Sans', sans-serif;letter-spacing:0.213px;text-shadow:0 1px 0 rgba(0,0,0,.4);">Configuration</span>
<span class="t" id="t37" style="left:825.50px;top:109.30px;font-size:15px;color:#f2f2f2;font-weight:normal;font-family:'Liberation Sans', sans-serif;letter-spacing:0.617px;text-shadow:0 1px 0 rgba(0,0,0,.4);">Tool</span>
<span class="t" id="t38" style="left:815.50px;top:129.30px;font-size:15px;color:#f2f2f2;font-weight:normal;font-family:'Liberation Sans', sans-serif;letter-spacing:-0.400px;text-shadow:0 1px 0 rgba(0,0,0,.4);">Palettes</span>
<span class="t" id="t39" style="left:873.50px;top:109.30px;font-size:15px;color:#f2f2f2;font-weight:normal;font-family:'Liberation Sans', sans-serif;letter-spacing:-0.037px;text-shadow:0 1px 0 rgba(0,0,0,.4);">Properties</span>
<span class="t" id="t40" style="left:948.50px;top:109.30px;font-size:15px;color:#f2f2f2;font-weight:normal;font-family:'Liberation Sans', sans-serif;letter-spacing:-0.321px;text-shadow:0 1px 0 rgba(0,0,0,.4);">Sheet Set</span>
<span class="t" id="t41" style="left:950.50px;top:129.30px;font-size:15px;color:#f2f2f2;font-weight:normal;font-family:'Liberation Sans', sans-serif;letter-spacing:-0.029px;text-shadow:0 1px 0 rgba(0,0,0,.4);">Manager</span>
<span class="t" id="t42" style="left:1102.50px;top:108.80px;font-size:15px;color:#f2f2f2;font-weight:normal;font-family:'Liberation Sans', sans-serif;letter-spacing:-0.198px;text-shadow:0 1px 0 rgba(0,0,0,.4);">Switch</span>
<span class="t" id="t43" style="left:1093.50px;top:128.80px;font-size:15px;color:#f2f2f2;font-weight:normal;font-family:'Liberation Sans', sans-serif;letter-spacing:0.163px;text-shadow:0 1px 0 rgba(0,0,0,.4);">Windows</span>
<span class="t" id="t44" style="left:1177.50px;top:109.30px;font-size:15px;color:#f2f2f2;font-weight:normal;font-family:'Liberation Sans', sans-serif;letter-spacing:-0.043px;text-shadow:0 1px 0 rgba(0,0,0,.4);">File</span>
<span class="t" id="t45" style="left:1174.50px;top:129.30px;font-size:15px;color:#f2f2f2;font-weight:normal;font-family:'Liberation Sans', sans-serif;letter-spacing:-0.422px;text-shadow:0 1px 0 rgba(0,0,0,.4);">Tabs</span>
<span class="t" id="t46" style="left:1216.50px;top:109.30px;font-size:15px;color:#f2f2f2;font-weight:normal;font-family:'Liberation Sans', sans-serif;letter-spacing:0.159px;text-shadow:0 1px 0 rgba(0,0,0,.4);">Layout</span>
<span class="t" id="t47" style="left:1224.50px;top:129.30px;font-size:15px;color:#f2f2f2;font-weight:normal;font-family:'Liberation Sans', sans-serif;letter-spacing:-0.422px;text-shadow:0 1px 0 rgba(0,0,0,.4);">Tabs</span>
<span class="t" id="t48" style="left:207.50px;top:72.30px;font-size:15px;color:#f2f2f2;font-weight:normal;font-family:'Liberation Sans', sans-serif;letter-spacing:0.271px;text-shadow:0 1px 0 rgba(0,0,0,.4);">Top</span>
<span class="t" id="t49" style="left:207.50px;top:97.30px;font-size:15px;color:#f2f2f2;font-weight:normal;font-family:'Liberation Sans', sans-serif;letter-spacing:0.411px;text-shadow:0 1px 0 rgba(0,0,0,.4);">Bottom</span>
<span class="t" id="t50" style="left:207.50px;top:122.30px;font-size:15px;color:#f2f2f2;font-weight:normal;font-family:'Liberation Sans', sans-serif;letter-spacing:0.242px;text-shadow:0 1px 0 rgba(0,0,0,.4);">Left</span>
<span class="t" id="t51" style="left:567.50px;top:67.30px;font-size:15px;color:#f2f2f2;font-weight:normal;font-family:'Liberation Sans', sans-serif;letter-spacing:0.128px;text-shadow:0 1px 0 rgba(0,0,0,.4);">Named</span>
<span class="t" id="t52" style="left:568.50px;top:98.30px;font-size:15px;color:#f2f2f2;font-weight:normal;font-family:'Liberation Sans', sans-serif;letter-spacing:-0.383px;text-shadow:0 1px 0 rgba(0,0,0,.4);">Join</span>
<span class="t" id="t53" style="left:568.50px;top:129.30px;font-size:15px;color:#f2f2f2;font-weight:normal;font-family:'Liberation Sans', sans-serif;letter-spacing:-0.362px;text-shadow:0 1px 0 rgba(0,0,0,.4);">Restore</span>
<span class="t" id="t54" style="left:708.50px;top:128.80px;font-size:15px;color:#f2f2f2;font-weight:normal;font-family:'Liberation Sans', sans-serif;letter-spacing:0.219px;text-shadow:0 1px 0 rgba(0,0,0,.4);">World</span>
<span class="t" id="t55" style="left:1296.50px;top:67.30px;font-size:15px;color:#f2f2f2;font-weight:normal;font-family:'Liberation Sans', sans-serif;letter-spacing:0.226px;text-shadow:0 1px 0 rgba(0,0,0,.4);">Tile Horizontally</span>
<span class="t" id="t56" style="left:1297.50px;top:98.30px;font-size:15px;color:#f2f2f2;font-weight:normal;font-family:'Liberation Sans', sans-serif;letter-spacing:0.079px;text-shadow:0 1px 0 rgba(0,0,0,.4);">Tile Vertically</span>
<span class="t" id="t57" style="left:1296.50px;top:129.30px;font-size:15px;color:#f2f2f2;font-weight:normal;font-family:'Liberation Sans', sans-serif;letter-spacing:-0.458px;text-shadow:0 1px 0 rgba(0,0,0,.4);">Cascade</span>
<span class="t" id="t58" style="left:1444.50px;top:67.30px;font-size:15px;color:#f2f2f2;font-weight:normal;font-family:'Liberation Sans', sans-serif;letter-spacing:-0.302px;text-shadow:0 1px 0 rgba(0,0,0,.4);">Unsaved View</span>
<span class="t" id="t59" style="left:1450.50px;top:98.30px;font-size:15px;color:#f2f2f2;font-weight:normal;font-family:'Liberation Sans', sans-serif;letter-spacing:-0.053px;text-shadow:0 1px 0 rgba(0,0,0,.4);">New View</span>
<span class="t" id="t60" style="left:1449.50px;top:129.30px;font-size:15px;color:#f2f2f2;font-weight:normal;font-family:'Liberation Sans', sans-serif;letter-spacing:-0.052px;text-shadow:0 1px 0 rgba(0,0,0,.4);">View Manager</span>
<span class="t" id="t61" style="left:30.50px;top:159.30px;font-size:15px;color:#ececec;font-weight:normal;font-family:'Liberation Sans', sans-serif;letter-spacing:0.213px;text-shadow:0 1px 0 rgba(0,0,0,.4);">Viewport Tools</span>
<span class="t" id="t62" style="left:276.50px;top:159.30px;font-size:15px;color:#ececec;font-weight:normal;font-family:'Liberation Sans', sans-serif;letter-spacing:-0.350px;text-shadow:0 1px 0 rgba(0,0,0,.4);">Views</span>
<span class="t" id="t63" style="left:463.50px;top:159.30px;font-size:15px;color:#ececec;font-weight:normal;font-family:'Liberation Sans', sans-serif;letter-spacing:0.225px;text-shadow:0 1px 0 rgba(0,0,0,.4);">Model Viewports</span>
<span class="t" id="t64" style="left:670.50px;top:159.30px;font-size:15px;color:#ececec;font-weight:normal;font-family:'Liberation Sans', sans-serif;letter-spacing:-0.081px;text-shadow:0 1px 0 rgba(0,0,0,.4);">Coordinates</span>
<span class="t" id="t65" style="left:910.50px;top:159.30px;font-size:15px;color:#ececec;font-weight:normal;font-family:'Liberation Sans', sans-serif;letter-spacing:-0.275px;text-shadow:0 1px 0 rgba(0,0,0,.4);">Palettes</span>
<span class="t" id="t66" style="left:1208.50px;top:159.30px;font-size:15px;color:#ececec;font-weight:normal;font-family:'Liberation Sans', sans-serif;letter-spacing:0.069px;text-shadow:0 1px 0 rgba(0,0,0,.4);">Interface</span>
<span class="t" id="t67" style="left:1499.50px;top:159.30px;font-size:15px;color:#ececec;font-weight:normal;font-family:'Liberation Sans', sans-serif;letter-spacing:-0.115px;text-shadow:0 1px 0 rgba(0,0,0,.4);">Named Views</span>
<span class="t" id="t68" style="left:36.50px;top:189.80px;font-size:15px;color:#a6a6a6;font-weight:normal;font-family:'Liberation Sans', sans-serif;letter-spacing:0.062px;">Start</span>
<span class="t" id="t69" style="left:190.50px;top:189.80px;font-size:15px;color:#e6e6e6;font-weight:normal;font-family:'Liberation Sans', sans-serif;letter-spacing:0.200px;text-shadow:0 1px 0 rgba(0,0,0,.4);">Drawing1*</span>
<span class="t" id="t70" style="left:31.00px;top:223.23px;font-size:14.5px;color:#e8e8e8;font-weight:normal;font-family:'Liberation Sans', sans-serif;letter-spacing:0.502px;">[−][Top][2D Wireframe]</span>
<span class="t" id="t71" style="left:25.50px;top:964.30px;font-size:15px;color:#b4b4b4;font-weight:bold;font-family:'Liberation Sans', sans-serif;letter-spacing:0.131px;text-shadow:0 1px 0 rgba(0,0,0,.4);">Model</span>
<span class="t" id="t72" style="left:98.50px;top:964.30px;font-size:15px;color:#f0f0f0;font-weight:normal;font-family:'Liberation Sans', sans-serif;letter-spacing:-0.199px;text-shadow:0 1px 0 rgba(0,0,0,.4);">Layout1</span>
<span class="t" id="t73" style="left:179.50px;top:964.30px;font-size:15px;color:#f0f0f0;font-weight:normal;font-family:'Liberation Sans', sans-serif;letter-spacing:-0.056px;text-shadow:0 1px 0 rgba(0,0,0,.4);">Layout2</span>
<span class="t" id="t74" style="left:1165.50px;top:969.88px;font-size:15.5px;color:#f4f4f4;font-weight:normal;font-family:'Liberation Sans', sans-serif;letter-spacing:-0.825px;">MODEL</span>
<span class="t" id="t75" style="left:1611.50px;top:970.10px;font-size:15px;color:#a8a8a8;font-weight:normal;font-family:'Liberation Sans', sans-serif;letter-spacing:-0.672px;">1:1 / 100%</span>
<span class="t" id="t76" style="left:659.50px;top:982.60px;font-size:15px;color:#c4c4c4;font-weight:normal;font-family:'Liberation Mono', monospace;letter-spacing:-0.127px;">Command:</span>
<span class="t" id="t77" style="left:1824.50px;top:232.38px;font-size:22px;color:#c6c6c6;font-weight:bold;font-family:'Liberation Sans', sans-serif;letter-spacing:0.000px;transform:scaleX(0.9440);transform-origin:0 0;">N</span>
<span class="t" id="t78" style="left:1824.50px;top:350.38px;font-size:22px;color:#c6c6c6;font-weight:bold;font-family:'Liberation Sans', sans-serif;letter-spacing:0.000px;transform:scaleX(1.0213);transform-origin:0 0;">S</span>
<span class="t" id="t79" style="left:1762.50px;top:291.38px;font-size:22px;color:#c6c6c6;font-weight:bold;font-family:'Liberation Sans', sans-serif;letter-spacing:0.000px;transform:scaleX(1.0594);transform-origin:0 0;">W</span>
<span class="t" id="t80" style="left:1884.50px;top:291.38px;font-size:22px;color:#c6c6c6;font-weight:bold;font-family:'Liberation Sans', sans-serif;letter-spacing:0.000px;transform:scaleX(0.9532);transform-origin:0 0;">E</span>
<span class="t" id="t81" style="left:1820.50px;top:294.10px;font-size:15px;color:#4a4f59;font-weight:bold;font-family:'Liberation Sans', sans-serif;letter-spacing:0.000px;-webkit-text-stroke:.45px #4a4f59;transform:scaleX(0.7685);transform-origin:0 0;">TOP</span>
<span class="t" id="t82" style="left:1807.00px;top:397.34px;font-size:12px;color:#4a4c55;font-weight:normal;font-family:'Liberation Sans', sans-serif;letter-spacing:0.500px;">WCS</span>
<!-- red highlight -->
<div class="a" style="left:988px;top:41px;width:82px;height:56px;border:8px solid #ed1c24;border-top-width:7.500px;box-sizing:border-box"></div>

</body></html>
